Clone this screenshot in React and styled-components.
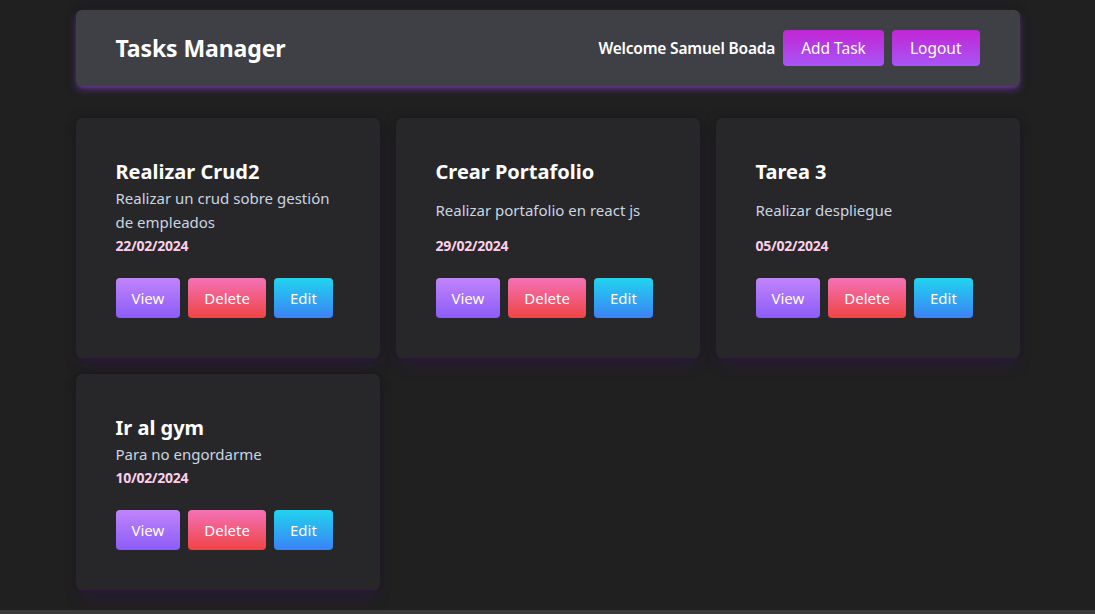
import React from 'react';
import styled, {createGlobalStyle} from 'styled-components';

const tasks=[
  {id:1,title:'Realizar Crud2',description:'Realizar un crud sobre gestión de empleados',date:'22/02/2024'},
  {id:2,title:'Crear Portafolio',description:'Realizar portafolio en react js',date:'29/02/2024'},
  {id:3,title:'Tarea 3',description:'Realizar despliegue',date:'05/02/2024'},
  {id:4,title:'Ir al gym',description:'Para no engordarme',date:'10/02/2024'},
];

const gradients={
  view:'linear-gradient(to bottom, #c084fc, #8b5cf6)',
  delete:'linear-gradient(to bottom, #f472b6, #ef4444)',
  edit:'linear-gradient(to bottom, #22d3ee, #3b82f6)',
  header:'linear-gradient(to bottom, #c026d3, #a855f7)',
};

function App() {
  return (
    <>
    <GlobalStyle/>
    <Page>
      <Container>
        <Navbar>
          <Brand>Tasks Manager</Brand>
          <NavRight>
            <Welcome>Welcome Samuel Boada</Welcome>
            <NavButton>Add Task</NavButton>
            <NavButton>Logout</NavButton>
          </NavRight>
        </Navbar>
        <Grid>
          {tasks.map((task)=>(
            <Card key={task.id}>
              <CardBody>
                <Title>{task.title}</Title>
                <Description>{task.description}</Description>
                <DateText>{task.date}</DateText>
              </CardBody>
              <Actions>
                <ActionButton $variant="view">View</ActionButton>
                <ActionButton $variant="delete">Delete</ActionButton>
                <ActionButton $variant="edit">Edit</ActionButton>
              </Actions>
            </Card>
          ))}
        </Grid>
      </Container>
    </Page>
    </>
  );
}

const GlobalStyle=createGlobalStyle`
*{box-sizing:border-box;}
html,body{
  margin:0;
  padding:0;
  background:#3a3a3a;
  font-family:"Noto Sans","Open Sans",sans-serif;
}
`;
const Page=styled.div`
background:#202020;
height:610px;
overflow:hidden;
padding-top:10px;
`;
const Container=styled.div`
width:944px;
margin:0 auto;
`;
const Navbar=styled.nav`
height:76px;
display:flex;
align-items:center;
justify-content:space-between;
padding:0 40px;
background:#3f4046;
border-radius:6px;
box-shadow:0 4px 8px -1px rgba(168,85,247,0.45),0 2px 4px -2px rgba(168,85,247,0.5),0 0 12px rgba(0,0,0,0.3);
`;
const Brand=styled.h1`
margin:0;
font-size:23px;
font-weight:700;
color:#fff;
letter-spacing:-0.1px;
`;
const NavRight=styled.div`
display:flex;
align-items:center;
gap:8px;
`;
const Welcome=styled.span`
color:#fff;
font-size:15.5px;
font-weight:600;
letter-spacing:-0.2px;
`;
const NavButton=styled.button`
height:36px;
padding:0 18px;
border:none;
border-radius:4px;
background:${gradients.header};
color:#fff;
font-family:inherit;
font-size:15.5px;
cursor:pointer;
`;
const Grid=styled.div`
display:grid;
grid-template-columns:repeat(3,1fr);
gap:16px;
margin-top:32px;
`;
const Card=styled.div`
display:flex;
flex-direction:column;
padding:40px;
background:#27272a;
border-radius:6px;
box-shadow:0 10px 15px -3px rgba(88,28,135,0.22),0 4px 6px -4px rgba(88,28,135,0.22),0 0 12px rgba(0,0,0,0.25);
`;
const CardBody=styled.div`
flex:1;
display:flex;
flex-direction:column;
justify-content:space-between;
`;
const Title=styled.h2`
margin:0;
font-size:20px;
line-height:28px;
font-weight:700;
color:#fff;
`;
const Description=styled.p`
margin:0;
font-size:15px;
line-height:24px;
color:#cbd5e1;
`;
const DateText=styled.span`
font-size:14px;
line-height:24px;
font-weight:700;
letter-spacing:-0.3px;
color:#fbcfe8;
`;
const Actions=styled.div`
display:flex;
gap:8px;
margin-top:20px;
`;
const ActionButton=styled.button`
height:40px;
padding:0 16px;
border:none;
border-radius:4px;
background:${(p)=>gradients[p.$variant]};
color:#fff;
font-family:inherit;
font-size:15px;
cursor:pointer;
`;

export default App;
